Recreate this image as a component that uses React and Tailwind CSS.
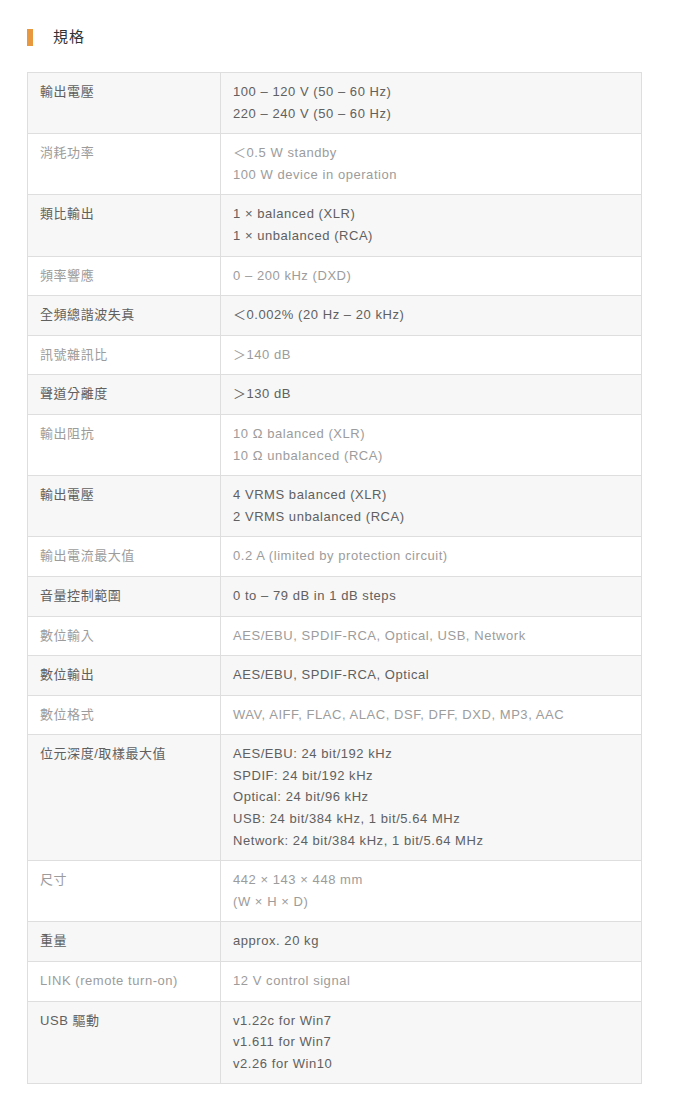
const specs = [
  ["輸出電壓", ["100 – 120 V (50 – 60 Hz)", "220 – 240 V (50 – 60 Hz)"]],
  ["消耗功率", ["＜0.5 W standby", "100 W device in operation"]],
  ["類比輸出", ["1 × balanced (XLR)", "1 × unbalanced (RCA)"]],
  ["頻率響應", ["0 – 200 kHz (DXD)"]],
  ["全頻總諧波失真", ["＜0.002% (20 Hz – 20 kHz)"]],
  ["訊號雜訊比", ["＞140 dB"]],
  ["聲道分離度", ["＞130 dB"]],
  ["輸出阻抗", ["10 Ω balanced (XLR)", "10 Ω unbalanced (RCA)"]],
  ["輸出電壓", ["4 VRMS balanced (XLR)", "2 VRMS unbalanced (RCA)"]],
  ["輸出電流最大值", ["0.2 A (limited by protection circuit)"]],
  ["音量控制範圍", ["0 to – 79 dB in 1 dB steps"]],
  ["數位輸入", ["AES/EBU, SPDIF-RCA, Optical, USB, Network"]],
  ["數位輸出", ["AES/EBU, SPDIF-RCA, Optical"]],
  ["數位格式", ["WAV, AIFF, FLAC, ALAC, DSF, DFF, DXD, MP3, AAC"]],
  [
    "位元深度/取樣最大值",
    [
      "AES/EBU: 24 bit/192 kHz",
      "SPDIF: 24 bit/192 kHz",
      "Optical: 24 bit/96 kHz",
      "USB: 24 bit/384 kHz, 1 bit/5.64 MHz",
      "Network: 24 bit/384 kHz, 1 bit/5.64 MHz",
    ],
  ],
  ["尺寸", ["442 × 143 × 448 mm", "(W × H × D)"]],
  ["重量", ["approx. 20 kg"]],
  ["LINK (remote turn-on)", ["12 V control signal"]],
  ["USB 驅動", ["v1.22c for Win7", "v1.611 for Win7", "v2.26 for Win10"]],
];

export default function App() {
  return (
    <div className="min-h-screen bg-white font-['Liberation_Sans','Noto_Sans_CJK_TC',sans-serif] pl-[27px] pr-[33px] pt-[29px]">
      {/* Title */}
      <div className="flex items-center h-[17px]">
        <span className="w-[6px] h-[17px] bg-[#e8983f]" />
        <h2 className="ml-[20px] text-[15px] tracking-[1px] text-[#333]">
          規格
        </h2>
      </div>

      {/* Spec table */}
      <table className="mt-[26px] w-full border-collapse border border-[#dedede] text-[13px] tracking-[0.55px] leading-[21.6px]">
        <tbody>
          {specs.map(([label, values], i) => {
            const odd = i % 2 === 0;
            return (
              <tr
                key={i}
                className={`border-t border-[#dedede] ${
                  odd ? "bg-[#f7f7f7] text-[#606060]" : "bg-white text-[#9c9c9c]"
                }`}
              >
                <td className="w-[193px] align-top px-3 pt-[8px] pb-[9px] border-r border-[#dedede]">
                  {label}
                </td>
                <td className="align-top px-3 pt-[8px] pb-[9px]">
                  {values.map((v, j) => (
                    <div key={j}>{v}</div>
                  ))}
                </td>
              </tr>
            );
          })}
        </tbody>
      </table>
    </div>
  );
}
